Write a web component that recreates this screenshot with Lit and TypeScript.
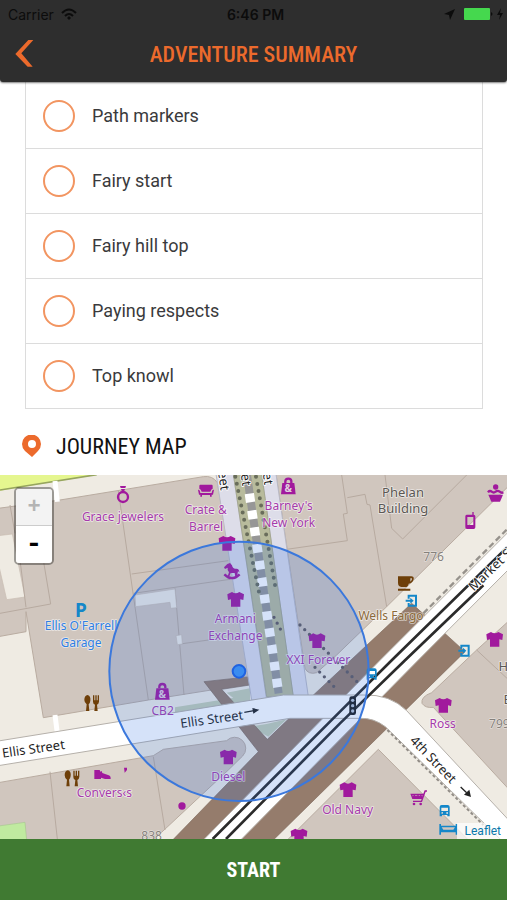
import { LitElement, css, html, svg } from "lit";
import { customElement, state } from "lit/decorators.js";

type Place = { icon: string; x: number; y: number };
type Label = { x: number; y: number; text: string; kind?: string; angle?: number };

const places: Place[] = [
  { icon: "ring", x: 369, y: 74 },
  { icon: "sofa", x: 618, y: 62 },
  { icon: "bag", x: 865, y: 49 },
  { icon: "shirt", x: 681, y: 220 },
  { icon: "horse", x: 696, y: 304 },
  { icon: "shirt", x: 707, y: 388 },
  { icon: "shirt", x: 951, y: 512 },
  { icon: "shirt", x: 1484, y: 508 },
  { icon: "shirt", x: 1330, y: 706 },
  { icon: "shirt", x: 685, y: 861 },
  { icon: "shirt", x: 1044, y: 959 },
  { icon: "shirt", x: 897, y: 1098 },
  { icon: "bag", x: 487, y: 665 },
  { icon: "cake", x: 1487, y: 70 },
  { icon: "phone", x: 1411, y: 152 },
  { icon: "cup", x: 1216, y: 340 },
  { icon: "entrance", x: 1236, y: 392 },
  { icon: "entrance", x: 1394, y: 542 },
  { icon: "bus", x: 1115, y: 612 },
  { icon: "bus", x: 1334, y: 1022 },
  { icon: "food", x: 275, y: 699 },
  { icon: "food", x: 216, y: 925 },
  { icon: "shoe", x: 307, y: 914 },
  { icon: "cart", x: 1256, y: 983 },
  { icon: "bed", x: 1345, y: 1078 },
  { icon: "signal", x: 1058, y: 707 },
];

const labels: Label[] = [
  { x: 369, y: 154, text: "Grace jewelers" },
  { x: 617, y: 132, text: "Crate &" },
  { x: 618, y: 183, text: "Barrel" },
  { x: 866, y: 121, text: "Barney's" },
  { x: 866, y: 172, text: "New York" },
  { x: 706, y: 458, text: "Armani" },
  { x: 706, y: 510, text: "Exchange" },
  { x: 955, y: 583, text: "XXI Forever" },
  { x: 488, y: 734, text: "CB2" },
  { x: 685, y: 933, text: "Diesel" },
  { x: 1043, y: 1032, text: "Old Navy" },
  { x: 1328, y: 775, text: "Ross" },
  { x: 313, y: 981, text: "Convers‹s" },
  { x: 243, y: 480, text: "Ellis O'Farrell", kind: "parking" },
  { x: 243, y: 531, text: "Garage", kind: "parking" },
  { x: 1173, y: 449, text: "Wells Fargo", kind: "food" },
  { x: 1209, y: 80, text: "Phelan", kind: "building" },
  { x: 1209, y: 129, text: "Building", kind: "building" },
  { x: 1301, y: 273, text: "776", kind: "number" },
  { x: 1498, y: 775, text: "799", kind: "number" },
  { x: 455, y: 1111, text: "838", kind: "number" },
  { x: 1510, y: 604, text: "H", kind: "building" },
  { x: 1521, y: 703, text: "E", kind: "building" },
  { x: 102, y: 850, text: "Ellis Street", kind: "street", angle: -8 },
  { x: 637, y: 761, text: "Ellis Street", kind: "street", angle: -8 },
  { x: 1290, y: 878, text: "4th Street", kind: "street", angle: 46 },
  { x: 1511, y: 279, text: "Market Street", kind: "street", angle: -44 },
  { x: 658, y: 34, text: "eet", kind: "street", angle: 82 },
  { x: 725, y: 31, text: "et", kind: "street", angle: 82 },
  { x: 791, y: 28, text: "et", kind: "street", angle: 82 },
];

// Every map icon is drawn round its own centre.
const icons: Record<string, unknown> = {
  shirt: svg`<path class="shop" d="M-11-22-25-15-23 2-14 0V22H14V0L23 2 25-15 11-22Q0-14-11-22Z"/>`,
  ring: svg`<circle class="shop-line" cy="7" r="15"/><path class="shop" d="M-9-26H9L7-20H-7ZM-6-17H6L3-9H-3Z"/>`,
  sofa: svg`<path class="shop" d="M-17-18H17Q20-18 20-14V-6Q15-5 13 3H-13Q-15-5-20-6V-14Q-20-18-17-18ZM-24-3Q-18-4-17 7H17Q18-4 24-3L21 12H17V18H12V13H-12V18H-17V12H-21Z"/>`,
  bag: svg`<path class="shop-line" d="M-9-10V-15Q-9-23 0-23T9-15V-10"/><path class="shop" d="M-18-10H18L22 24H-22Z"/><text class="amp" x="0" y="18">&amp;</text>`,
  horse: svg`<path class="shop-line" d="M-23 9Q0 32 23 9"/><path class="shop" d="M-14-22-6-25 0-18Q2-7 12-8 22-9 22 4L18-1 15 17H10L8 5H-4L-9 18H-14L-9 3Q-15-3-13-11L-21-7-24-12Z"/>`,
  cake: svg`<circle class="shop" cy="-19" r="8"/><path class="shop-line" d="M-23-3Q-18-10-12-5T0-5 12-5 23-3"/><path class="shop" d="M-22 4H22L13 25H-13Z"/>`,
  phone: svg`<path class="shop" fill-rule="evenodd" d="M-11-18H6V-26H10V-18Q15-18 15-13V20Q15 25 10 25H-10Q-15 25-15 20V-13Q-15-18-11-18ZM-9-11V13H9V-11Z"/>`,
  cup: svg`<path class="food" fill-rule="evenodd" d="M-22-21H14Q27-23 25-12 22 0 10 1 8 11 0 11H-12Q-22 9-22-2ZM15-15V-5Q21-7 20-15ZM-22 16H15V22H-22Z"/>`,
  food: svg`<path class="food" d="M-12-24Q-2-20-4-7-5 1-9 4L-7 24H-17L-15 4Q-22-1-22-9-22-22-12-24ZM4-23H8V-8H11V-23H15V-8H18V-23H22V-4Q21 3 16 5L18 24H8L10 5Q4 3 4-4Z"/>`,
  shoe: svg`<path class="shop" d="M-24-14H-8L-6-9-2-11 0-5Q8-2 17 1 26 2 25 13H8L-4 9V13H-24Z"/>`,
  cart: svg`<path class="shop" d="M-25-12H14L18-22H25V-18H21L10 13H-17V9H7L9 4H-19ZM-19-7-17-2H10L12-7Z"/><path class="shop-thin" d="M-19-4H11M-14-10-11 2M-2-10V2M7-10 5 2"/><circle class="shop" cx="-14" cy="19" r="4"/><circle class="shop" cx="6" cy="19" r="4"/>`,
  entrance: svg`<path class="transport-line" d="M-10-6V-15H12V15H-10V7M-19 0H0"/><path class="transport" d="M-5-9 5 0-5 9Z"/>`,
  bus: svg`<path class="transport" fill-rule="evenodd" d="M-9-17H9Q15-17 15-11V17H8V13H-8V17H-15V-11Q-15-17-9-17ZM-10-9V1H10V-9ZM-10 5V9H-5V5ZM5 5V9H10V5Z"/>`,
  bed: svg`<path class="transport" d="M-27-16H-22V-11H22V-16H27V16H22V9H-22V16H-27ZM-20-6-15 1H15L20-6Z" fill-rule="evenodd"/>`,
  signal: svg`<rect class="signal" x="-10" y="-28" width="20" height="56" rx="7"/><circle class="lamp" cy="-16" r="5"/><circle class="lamp" r="5"/><circle class="lamp" cy="16" r="5"/>`,
};

@customElement("journey-map")
class JourneyMap extends LitElement {
  static styles = css`
    :host { display: block; position: relative; background: #efebe3; }
    .map { display: block; width: 100%; }
    .building { fill: #d0c6be; stroke: #b9aca1; stroke-width: 3; }
    .walls { fill: none; stroke: #b7aaa0; stroke-width: 3; }
    .yard { fill: #efebe3; stroke: #c9bdb2; stroke-width: 2; }
    .grass { fill: #e5f68f; }
    .hedge { fill: none; stroke: #96a45f; stroke-width: 5; }
    .park { fill: #c0eaa0; stroke: #a9c592; stroke-width: 2; }
    .planting { fill: #c3cdb4; }
    .plaza { fill: #957c6c; stroke: #7e695c; stroke-width: 2; }
    .road { fill: #fff; stroke: #b5b0aa; stroke-width: 3; }
    .drive { stroke: #fff; stroke-width: 15; }
    .lane { fill: #dddde9; stroke: #b9b9c5; stroke-width: 3; }
    .median { fill: #b8bb9c; stroke: #9c9f84; stroke-width: 2; }
    .sleepers { stroke: #979797; stroke-width: 24; }
    .track { stroke: #fff; stroke-width: 28; stroke-dasharray: 26 25; }
    .dots { fill: none; stroke: #696d5b; stroke-width: 12; stroke-linecap: round; stroke-dasharray: 0 22; }
    .steps { fill: none; stroke: #625b5e; stroke-width: 10; stroke-linecap: round; stroke-dasharray: 0 20; }
    .rail { fill: none; stroke: #2b2b2b; stroke-width: 8; }
    .dash { fill: none; stroke: #96928c; stroke-width: 7; stroke-dasharray: 18 10; }
    .kerb { fill: none; stroke: #918c86; stroke-width: 6; stroke-dasharray: 9 7; }
    .arrow { fill: none; stroke: #222; stroke-width: 4; }
    .head { fill: #222; }
    .shop { fill: #a1199d; }
    .shop-line { fill: none; stroke: #a1199d; stroke-width: 7; }
    .shop-thin { fill: none; stroke: #a1199d; stroke-width: 4; }
    .food { fill: #6e3f09; }
    .transport { fill: #1487c9; }
    .transport-line { fill: none; stroke: #1487c9; stroke-width: 6; }
    .signal { fill: #1d1d1d; }
    .lamp { fill: #b9c3d3; }
    .amp { font: bold 30px "Noto Sans", sans-serif; fill: #e0d0de; text-anchor: middle; }
    .label {
      font: 36px "Noto Sans", sans-serif;
      text-anchor: middle;
      fill: #a63bab;
      stroke: #ffffff99;
      stroke-width: 5;
      stroke-linejoin: round;
      paint-order: stroke;
    }
    .label.parking { fill: #2f7fe4; }
    .label.food { fill: #8b6a3a; }
    .label.building { fill: #5c5854; font-size: 39px; }
    .label.number { fill: #85807b; stroke-width: 3; }
    .label.street { fill: #1f1f1f; font-size: 39px; stroke: #fff; }
    .lot { font: bold 57px "Noto Sans", sans-serif; fill: #1487c9; text-anchor: middle; }
    .range { fill: #2f6ee0; fill-opacity: 0.2; stroke: #3b78dc; stroke-width: 6; }
    .here { fill: #3a8cf0; stroke: #1f62e0; stroke-width: 6; }
    .zoom {
      position: absolute;
      top: 12px;
      left: 14px;
      display: flex;
      flex-direction: column;
      width: 36px;
      border: 2px solid #00000059;
      border-radius: 5px;
      background-clip: padding-box;
      overflow: hidden;
    }
    .zoom button {
      height: 37px;
      padding: 0;
      border: 0;
      background: #fff;
      color: #000;
      font: bold 22px "Liberation Mono", monospace;
    }
    .zoom button:first-child { border-bottom: 1px solid #ccc; }
    .zoom button:last-child { font-size: 28px; }
    .zoom button:disabled { background: #f3f3f3; color: #b4b4b4; }
    .credit {
      position: absolute;
      right: 0;
      bottom: 0;
      padding: 0 6px 0 8px;
      background: #ffffffb3;
      color: #0b78ab;
      font: 12px/16px Roboto, sans-serif;
      text-decoration: none;
    }
  `;

  render() {
    return html`
      <svg class="map" viewBox="0 15 1521 1092" role="img" aria-label="Map of the journey area">
        <path class="grass" d="M0 15H290L0 62Z" />
        <path class="hedge" d="M0 60 290 14" />
        <path class="building" d="M-5 115 180 90 610 20Q638 16 652 38L760 640 445 690 130 743 78 425V485L-5 500Z" />
        <path class="yard" d="M-5 197 37 192 75 381 20 389-5 280Z" />
        <path class="walls" d="M0 430 152 402 130 270M60 270 78 412M30 105 45 190M355 62 445 690M395 312 685 272M400 370 690 328M525 355 552 675M540 522 640 508" />
        <path class="yard" d="M405 375 525 357 530 413 512 415 510 397 407 410ZM528 497 545 494 547 522 532 524Z" />
        <path class="building" d="M828 12H1524V50L1160 410 1010 555 950 608Q925 615 915 595Z" />
        <path class="walls" d="M1025 15 1042 130 1030 132 1042 212 860 238M1042 83 1095 73 1101 103 1110 105 1160 410M1155 15 1175 175 1208 207 1400 15" />
        <path class="building" d="M1524 455 1430 540 1295 668Q1262 680 1266 700 1276 715 1300 712L1524 955Z" />
        <path class="walls" d="M1430 540 1521 625" />
        <path class="building" d="M1135 838 862 1110H1405Z" />
        <path class="building" d="M-5 938 460 857 490 838 680 812A30 30 0 1 1 728 858L685 900 460 1110H-5Z" />
        <path class="walls" d="M150 905 172 1107M460 860 495 1080" />
        <path class="park" d="M-5 1068 75 1057 80 1110H-5Z" />
        <path class="planting" d="M525 712 750 676V698L525 735ZM680 668 750 655V676L700 684ZM752 770 800 762 860 748 805 800Z" />
        <path class="plaza" d="M1235 400 1395 545 820 1110H518L775 845 612 635 750 620V645L665 658 802 808 935 680Z" />
        <path class="drive" d="M165 33 172 95M165 735 172 790" />
        <path class="road" d="M610 1110 1141 570 1524 187V300L1255 570 722 1110Z" />
        <path class="lane" d="M648 12H700L800 690H755Z" />
        <path class="lane" d="M785 12H828L925 680H880Z" />
        <path class="median" d="M700 12H785L880 680H800Z" />
        <path class="road" d="M-5 813 850 675H1090Q1170 672 1220 722L1524 1048V1130L1156 770Q1120 743 1080 745H870L-5 887Z" />
        <path class="sleepers" d="M741 15 836 670" />
        <path class="track" d="M748 71 836 670" />
        <path class="dots" d="M706 20 778 372M768 20 828 362" />
        <path class="steps" d="M822 442 848 490M900 465 1072 636M945 592 1012 660" />
        <path class="rail" d="M638 1107 1020 725 1176 570 1521 232M678 1107 1020 760 1216 570 1450 346" />
        <path class="dash" d="M1270 430 1521 178" />
        <path class="kerb" d="M1162 780 1450 1065" />
        <path class="arrow" d="M733 727 762 722M1382 951 1400 968" />
        <path class="head" d="M757 714 778 719 760 731ZM1408 959 1413 981 1392 974Z" />
        <circle class="shop" cx="546" cy="1008" r="11" />
        <path class="shop" d="M372 893H381V900L374 908Z" />
        ${places.map((p) => svg`<g transform="translate(${p.x} ${p.y})">${icons[p.icon]}</g>`)}
        <text class="lot" x="243" y="441">P</text>
        ${labels.map(
          (l) => svg`<text class="label ${l.kind ?? ""}" x=${l.x} y=${l.y}
            transform="rotate(${l.angle ?? 0} ${l.x} ${l.y})">${l.text}</text>`
        )}
        <circle class="range" cx="717" cy="604" r="389" />
        <circle class="here" cx="717" cy="604" r="19" />
      </svg>
      <div class="zoom">
        <button type="button" aria-label="Zoom in" disabled>+</button>
        <button type="button" aria-label="Zoom out">-</button>
      </div>
      <a class="credit" href="#leaflet">Leaflet</a>
    `;
  }
}

@customElement("app-root")
class AppRoot extends LitElement {
  @state() private stops = ["Path markers", "Fairy start", "Fairy hill top", "Paying respects", "Top knowl"];

  static styles = css`
    :host {
      display: flex;
      flex-direction: column;
      min-height: 100vh;
      background: #fff;
      color: #3a3a3c;
      font-family: "Roboto Condensed", "Liberation Sans Narrow", Roboto, sans-serif;
    }
    .top {
      position: sticky;
      top: 0;
      z-index: 1;
      height: 82px;
      background: #2e2e2e;
      border-radius: 0 0 3px 3px;
      box-shadow: 0 1px 2px #00000080;
    }
    .row {
      display: grid;
      grid-template-columns: 1fr auto 1fr;
      align-items: center;
    }
    .status {
      height: 28px;
      padding: 0 4px 0 8px;
      color: #0c0c0c;
      font: 14px Inter, sans-serif;
    }
    .status b { font-weight: 600; }
    .side { display: flex; align-items: center; gap: 7px; }
    .side.end { justify-content: flex-end; }
    .nav { height: 52px; padding: 0 14px; }
    .back { width: 20px; height: 32px; padding: 0; border: 0; background: none; }
    .back svg { display: block; }
    h1, h2 { margin: 0; font-size: 22px; font-weight: 400; }
    h1 { color: #ec6a2c; font-weight: 500; }
    .stops {
      margin: 0 24px 0 25px;
      padding: 2px 0 0;
      border: 1px solid #dcdcdc;
      border-width: 0 1px;
      list-style: none;
    }
    .stop {
      display: flex;
      align-items: center;
      gap: 17px;
      box-sizing: border-box;
      height: 65px;
      padding-left: 17px;
      border-bottom: 1px solid #dcdcdc;
      font: 18px Roboto, sans-serif;
    }
    .stop span { padding-bottom: 2px; }
    .stop input {
      appearance: none;
      width: 32px;
      height: 32px;
      margin: 0;
      border: 2px solid #f29561;
      border-radius: 50%;
    }
    .stop input:checked { background: #f29561; }
    .title {
      display: flex;
      align-items: center;
      gap: 15px;
      height: 58px;
      padding: 8px 22px 0;
      color: #111;
    }
    .start {
      flex: 1 0 61px;
      padding: 0;
      border: 0;
      background: #407a32;
      color: #fff;
      font: bold 20px "Roboto Condensed", "Liberation Sans Narrow", Roboto, sans-serif;
    }
  `;

  render() {
    return html`
      <header class="top">
        <div class="row status">
          <span class="side">
            Carrier
            <svg width="16" height="13" viewBox="0 0 16 13" fill="none" stroke="#0c0c0c" stroke-width="2">
              <path d="M1 5Q8-2 15 5M4 8Q8 4 12 8" />
              <path d="M8 8 10 10 8 12 6 10Z" fill="#0c0c0c" stroke="none" />
            </svg>
          </span>
          <b>6:46 PM</b>
          <span class="side end">
            <svg width="11" height="11" viewBox="0 0 11 11"><path d="M11 0 6 11 5 6 0 5Z" fill="#0c0c0c" /></svg>
            <svg width="41" height="12" viewBox="0 0 41 12">
              <rect x="2" width="26" height="12" rx="1" fill="#45d84e" />
              <path d="M29 4Q32 6 29 8Z" fill="#0c0c0c" />
              <path d="M39 0 35 7H38L37 12 41 5H38Z" fill="#0c0c0c" />
            </svg>
          </span>
        </div>
        <div class="row nav">
          <button class="back" type="button" aria-label="Back">
            <svg width="20" height="28" viewBox="0 0 60 84"><path d="M43 0H58L22 40 56 80H41L4 42Z" fill="#ec6a2c" /></svg>
          </button>
          <h1>ADVENTURE SUMMARY</h1>
        </div>
      </header>
      <ul class="stops">
        ${this.stops.map(
          (stop) => html`<li><label class="stop"><input type="checkbox" /><span>${stop}</span></label></li>`
        )}
      </ul>
      <div class="title">
        <svg width="19" height="22" viewBox="0 0 19 22">
          <path fill="#ec6a2c" fill-rule="evenodd" d="M10 22 3 16Q0 13 0 9A9 9 0 0 1 19 9Q19 13 16 16ZM10 5A4 4 0 1 0 10 13 4 4 0 0 0 10 5Z" />
        </svg>
        <h2>JOURNEY MAP</h2>
      </div>
      <journey-map></journey-map>
      <button class="start" type="button">START</button>
    `;
  }
}
